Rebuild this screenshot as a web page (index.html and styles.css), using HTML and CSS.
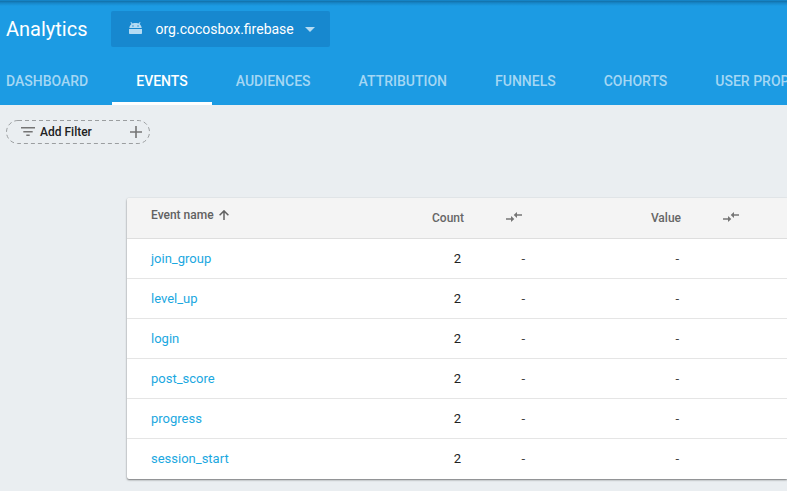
FILE: index.html
```html
<!DOCTYPE html>
<html lang="en">
<head>
<meta charset="utf-8">
<title>Analytics</title>
<link rel="stylesheet" href="styles.css">
</head>
<body>
<header class="header">
  <div class="toolbar">
    <h1 class="title">Analytics</h1>
    <button class="app-picker">
      <svg class="app-icon" viewBox="0 0 13 12"><path d="M0 7h13v4.200a.8.8 0 0 1-.8.8H.8a.8.8 0 0 1-.8-.8zM.3 6C.5 4.300 1.300 2.800 2.500 2L1.400.6 2.100 0l1.500 1.500C5.300.9 7.700.9 9.400 1.500L10.900 0l.7.6L10.500 2C11.700 2.800 12.500 4.300 12.700 6zM3.200 3.400v1h1.500v-1zm5.100 0v1h1.500v-1z"/></svg>
      <span class="app-name">org.cocosbox.firebase</span>
      <svg class="caret" viewBox="0 0 10 5"><path d="M0 0h10L5 5z"/></svg>
    </button>
  </div>
  <nav class="tabs">
    <a class="tab">Dashboard</a>
    <a class="tab active">Events</a>
    <a class="tab">Audiences</a>
    <a class="tab">Attribution</a>
    <a class="tab">Funnels</a>
    <a class="tab">Cohorts</a>
    <a class="tab">User Properties</a>
  </nav>
</header>
<main>
  <button class="filter">
    <svg class="pill" viewBox="0 0 144 24"><rect x=".5" y=".5" width="143" height="23" rx="11.500"/></svg>
    <svg class="filter-icon" viewBox="0 0 14 9"><path d="M0 0h14v1.500H0zM2.300 4h9.400v1.400H2.300zM5.300 7.600h3.400V9H5.300z"/></svg>
    <span class="filter-label">Add Filter</span>
    <svg class="plus" viewBox="0 0 12 12"><path d="M5.200 0h1.600v5.200H12v1.600H6.800V12H5.200V6.800H0V5.200h5.200z"/></svg>
  </button>
  <section class="card">
    <div class="row head">
      <span class="name">Event name <svg class="sort" viewBox="0 0 10 10"><path d="M5 10V1M.6 5.300 5 .9l4.400 4.400"/></svg></span>
      <span class="count">Count</span>
      <span class="swap"><svg viewBox="0 0 16 10"><path d="M0 6.300h5V4l3.300 3L5 10V7.700H0zM16 2.300h-5V0L7.700 3 11 6V3.700h5z"/></svg></span>
      <span class="value">Value</span>
      <span class="swap"><svg viewBox="0 0 16 10"><path d="M0 6.300h5V4l3.300 3L5 10V7.700H0zM16 2.300h-5V0L7.700 3 11 6V3.700h5z"/></svg></span>
    </div>
    <div class="row"><a class="name">join_group</a><span class="count">2</span><span class="dash">-</span><span class="value">-</span></div>
    <div class="row"><a class="name">level_up</a><span class="count">2</span><span class="dash">-</span><span class="value">-</span></div>
    <div class="row"><a class="name">login</a><span class="count">2</span><span class="dash">-</span><span class="value">-</span></div>
    <div class="row"><a class="name">post_score</a><span class="count">2</span><span class="dash">-</span><span class="value">-</span></div>
    <div class="row"><a class="name">progress</a><span class="count">2</span><span class="dash">-</span><span class="value">-</span></div>
    <div class="row"><a class="name">session_start</a><span class="count">2</span><span class="dash">-</span><span class="value">-</span></div>
  </section>
</main>
</body>
</html>
```
FILE: styles.css
```css
* { box-sizing: border-box; }
body {
  margin: 0;
  height: 491px;
  overflow: hidden;
  background: #eaeef1;
  font-family: Roboto, sans-serif;
}
svg { display: block; flex: none; fill: currentColor; }
button { border: 0; font: inherit; text-align: left; }
.header {
  height: 105px;
  padding-top: 11px;
  background: linear-gradient(#1583c5 0, #1583c5 1px, #126fa7 1px, #1787c9 3px, #1c9be3 6px);
  color: #fff;
}
.toolbar { display: flex; height: 36px; padding-left: 6px; }
.title { width: 105px; margin: 0; font-size: 20px; line-height: 37px; font-weight: 400; }
.app-picker {
  display: flex;
  align-items: center;
  width: 219px;
  padding: 0 15px 0 18px;
  border-radius: 2px;
  background: #1788cf;
  color: #fff;
}
.app-icon { width: 13px; height: 12px; margin-right: 13.500px; margin-top: -2px; color: #b5dbf3; }
.app-name { flex: 1; font-size: 14px; white-space: nowrap; }
.caret { width: 10px; height: 5px; color: #b5dbf3; }
.tabs { display: flex; height: 58px; padding-left: 6px; gap: 48px; overflow: hidden; }
.tab {
  flex: none;
  font-size: 14px;
  line-height: 69px;
  font-weight: 500;
  text-transform: uppercase;
  color: #a4d7f4;
}
.tab.active {
  margin: 0 -24px;
  padding: 0 24px;
  border-bottom: 3px solid #fff;
  color: #fff;
}
.filter {
  position: relative;
  display: flex;
  align-items: center;
  width: 144px;
  height: 24px;
  margin: 15px 0 0 6px;
  padding: 0 8px 0 15px;
  background: none;
  color: #757575;
}
.pill { position: absolute; inset: 0; width: 144px; height: 24px; fill: none; stroke: #9b9ea0; stroke-dasharray: 4 3; }
.filter-icon { width: 14px; height: 9px; margin-right: 5px; margin-top: -1px; }
.filter-label { flex: 1; font-size: 12px; font-weight: 500; color: #212121; }
.plus { width: 12px; height: 12px; }
.card {
  margin: 54px 0 0 127px;
  border-radius: 2px 0 0 2px;
  background: #fff;
  box-shadow: 0 1px 2px rgba(0, 0, 0, .5), 0 0 1px rgba(0, 0, 0, .15);
}
.row {
  display: grid;
  grid-template-columns: 257px 56px 42px 175px 1fr;
  height: 40px;
  padding-left: 24px;
  border-bottom: 1px solid #e5e5e5;
  font-size: 13px;
  line-height: 39px;
  color: #212121;
}
.row:last-child { border-bottom: 0; }
.row .name { color: #1ba8df; }
.count, .value { text-align: right; }
.row:not(.head) .count { padding-right: 3px; }
.row:not(.head) { grid-template-columns: 257px 56px 42px 173px; }
.dash { padding-left: 57.500px; white-space: nowrap; }
.dash, .value { color: #424242; }
.row.head {
  height: 41px;
  border-radius: 2px 0 0;
  border-color: #dedede;
  background: #f4f4f4;
  color: #666;
  font-size: 12px;
  line-height: 41px;
  font-weight: 500;
}
.head .value { color: #666; }
.head .name { display: flex; align-items: center; gap: 5px; height: 34px; line-height: 34px; color: #616161; }
.sort { width: 10px; height: 10px; fill: none; stroke: currentColor; stroke-width: 1.500px; }
.swap { padding: 14px 0 0 42px; }
.swap svg { width: 16px; height: 10px; color: #757575; }
```
